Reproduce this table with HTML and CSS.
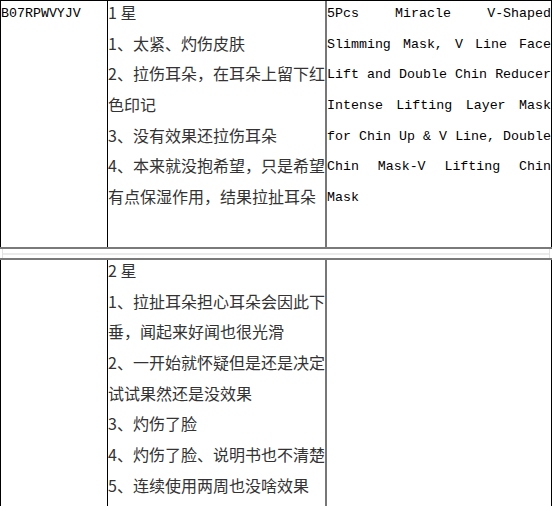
FILE: index.html
```html
<!DOCTYPE html>
<html lang="zh-CN">
<head>
<meta charset="utf-8">
<title>评论</title>
<link rel="stylesheet" href="styles.css">
</head>
<body>
<div class="sheet">
  <div class="row row-first">
    <div class="cell cell-asin"><div class="txt mono">B07RPWVYJV</div></div>
    <div class="cell cell-review">
      <div class="txt cjk">
        <p>1 星</p>
        <p>1、太紧、灼伤皮肤</p>
        <p>2、拉伤耳朵，在耳朵上留下红色印记</p>
        <p>3、没有效果还拉伤耳朵</p>
        <p>4、本来就没抱希望，只是希望有点保湿作用，结果拉扯耳朵</p>
      </div>
    </div>
    <div class="cell cell-title">
      <div class="txt mono justify">5Pcs Miracle V-Shaped Slimming Mask, V Line Face Lift and Double Chin Reducer Intense Lifting Layer Mask for Chin Up &amp; V Line, Double Chin Mask-V Lifting Chin Mask</div>
    </div>
  </div>
  <div class="gap"><div class="gap-line"></div></div>
  <div class="row row-second">
    <div class="cell cell-asin"></div>
    <div class="cell cell-review">
      <div class="txt cjk">
        <p>2 星</p>
        <p>1、拉扯耳朵担心耳朵会因此下垂，闻起来好闻也很光滑</p>
        <p>2、一开始就怀疑但是还是决定试试果然还是没效果</p>
        <p>3、灼伤了脸</p>
        <p>4、灼伤了脸、说明书也不清楚</p>
        <p>5、连续使用两周也没啥效果</p>
      </div>
    </div>
    <div class="cell cell-title"></div>
  </div>
</div>
</body>
</html>
```
FILE: styles.css
```css
* { box-sizing: border-box; }
html, body { margin: 0; padding: 0; background: #fff; }
body { overflow: hidden; }

.sheet {
  width: 552px;
}

.row {
  display: grid;
  grid-template-columns: 107px 218px 227px;
}

.row-first {
  height: 249px;
  border-top: 1px solid #000;
  border-bottom: 2px solid #7a7a7a;
}

.row-second {
  height: 260px;
  border-top: 2px solid #7a7a7a;
}

.cell {
  line-height: 23pt;
}

.cell-asin { border-left: 1px solid #000; }
.cell-review { border-left: 1px solid #000; }
.cell-title { border-left: 2px solid #777; border-right: 1px solid #000; }

.txt p { margin: 0; }

.mono {
  font-family: "Liberation Mono", "DejaVu Sans Mono", monospace;
  font-size: 13.3px;
  color: #000;
  margin-top: -2px;
}

.cjk {
  font-family: "Noto Sans CJK SC", "Noto Sans", sans-serif;
  font-size: 16px;
  color: #333;
  margin-top: -4px;
}

.row-second .cjk { margin-top: -5px; }

.justify { text-align: justify; }

.gap {
  height: 9px;
  margin: 0 2px;
  border-left: 1px solid #e2e2e2;
  border-right: 1px solid #e2e2e2;
  display: flex;
  align-items: center;
}

.gap-line {
  flex: 1;
  height: 2px;
  background: #ebebeb;
}
```
